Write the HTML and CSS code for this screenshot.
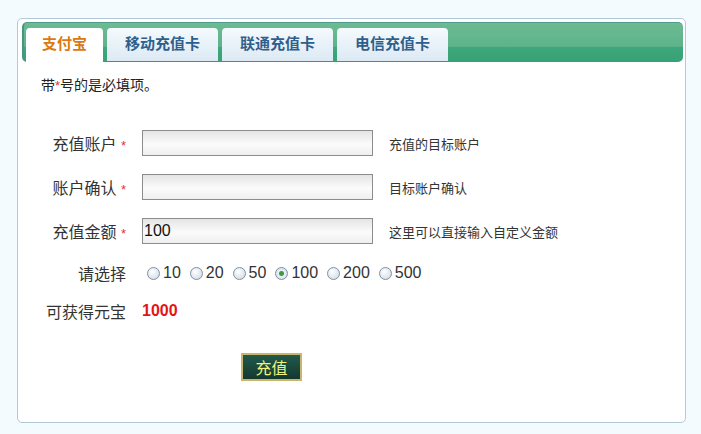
FILE: index.html
```html
<!DOCTYPE html>
<html lang="zh-CN">
<head>
    <meta charset="UTF-8">
    <title>充值</title>
    <link rel="stylesheet" href="styles.css">
</head>
<body>
    <div class="panel">
        <div class="tabbar">
            <a class="tab active">支付宝</a>
            <a class="tab">移动充值卡</a>
            <a class="tab">联通充值卡</a>
            <a class="tab">电信充值卡</a>
        </div>

        <p class="notice">带<span class="req">*</span>号的是必填项。</p>

        <form class="form">
            <div class="row">
                <label class="label">充值账户 <span class="req">*</span></label>
                <input class="field" type="text">
                <span class="hint">充值的目标账户</span>
            </div>
            <div class="row">
                <label class="label">账户确认 <span class="req">*</span></label>
                <input class="field" type="text">
                <span class="hint">目标账户确认</span>
            </div>
            <div class="row">
                <label class="label">充值金额 <span class="req">*</span></label>
                <input class="field" type="text" value="100">
                <span class="hint">这里可以直接输入自定义金额</span>
            </div>
            <div class="row row-radio">
                <label class="label">请选择</label>
                <div class="choices">
                    <label class="choice"><input type="radio" name="amt">10</label>
                    <label class="choice"><input type="radio" name="amt">20</label>
                    <label class="choice"><input type="radio" name="amt">50</label>
                    <label class="choice"><input type="radio" name="amt" checked>100</label>
                    <label class="choice"><input type="radio" name="amt">200</label>
                    <label class="choice"><input type="radio" name="amt">500</label>
                </div>
            </div>
            <div class="row row-total">
                <span class="label">可获得元宝</span>
                <span class="total">1000</span>
            </div>
            <div class="actions">
                <button type="button" class="submit">充值</button>
            </div>
        </form>
    </div>
</body>
</html>
```

FILE: styles.css
```css
body {
    margin: 0;
    padding: 0;
    background-color: #f4fbfe;
    font-family: "Liberation Sans", "Noto Sans CJK SC", sans-serif;
    color: #222;
}

.panel {
    box-sizing: border-box;
    width: 669px;
    height: 405px;
    margin: 18px 0 0 17px;
    padding: 3px 2px 0 4px;
    background-color: #fff;
    border: 1px solid #b4c9d7;
    border-radius: 5px;
}

/* green tab strip */
.tabbar {
    box-sizing: border-box;
    display: flex;
    align-items: flex-end;
    gap: 4px;
    height: 40px;
    padding-left: 2px;
    border-radius: 5px;
    border-top: 1px solid #4f9c8c;
    border-left: 2px solid #4a9486;
    background: linear-gradient(#6cbb92 0%, #5db38a 60%, #3ea77b 62%, #37a276 100%);
}

.tab {
    box-sizing: border-box;
    height: 34px;
    padding: 0 18px 2px;
    line-height: 32px;
    font-size: 15px;
    font-weight: bold;
    color: #2f5f8c;
    background: linear-gradient(#f5fafd, #dce9f4);
    border-radius: 4px 4px 0 0;
    border-bottom: 1px solid #3f8f85;
    cursor: pointer;
}

.tab.active {
    padding: 0 16px 2px;
    color: #d97a12;
    background: #fff;
    border-bottom-color: #fff;
}

.notice {
    margin: 14px 0 0 19px;
    font-size: 14px;
    line-height: 18px;
}

.req {
    color: #e53333;
    font-size: 13px;
}

.form {
    margin-top: 35px;
}

.row {
    display: flex;
    align-items: center;
    height: 26px;
    margin-bottom: 18px;
}

.label {
    width: 104px;
    margin-right: 16px;
    text-align: right;
    font-size: 16px;
    color: #333;
}

.field {
    box-sizing: border-box;
    width: 231px;
    height: 26px;
    margin: 0;
    padding: 0 1px;
    font-family: "Liberation Sans", sans-serif;
    font-size: 16px;
    color: #111;
    border: 1px solid #8c8c8c;
    background: linear-gradient(#e4e4e4, #fbfbfb 55%, #efefef);
    outline: none;
}

.hint {
    margin-left: 16px;
    font-size: 13px;
    color: #333;
}

.row-radio {
    height: 22px;
}

.choices {
    display: flex;
    gap: 9px;
    margin-left: 5px;
}

.choice {
    display: flex;
    align-items: center;
    font-size: 16px;
    color: #333;
}

.choice input {
    appearance: none;
    width: 13px;
    height: 13px;
    margin: 0 3px 0 0;
    border: 1px solid #7f90a0;
    border-radius: 50%;
    background: radial-gradient(circle at 40% 35%, #fff, #cbd6e1);
}

.choice input:checked {
    background: radial-gradient(circle, #3d9b3d 0, #3d9b3d 2px, #eaf0f5 3px, #cbd6e1);
}

.row-total {
    height: 20px;
    margin-top: -1px;
}

.total {
    font-size: 16px;
    font-weight: bold;
    color: #e31515;
}

.actions {
    padding: 14px 0 0 219px;
}

.submit {
    box-sizing: border-box;
    width: 61px;
    height: 28px;
    padding: 0;
    font-family: "Noto Sans CJK SC", sans-serif;
    font-size: 16px;
    color: #eef37c;
    background: linear-gradient(#215a4b, #14382f);
    border: 2px solid #c9b66c;
    cursor: pointer;
}
```
